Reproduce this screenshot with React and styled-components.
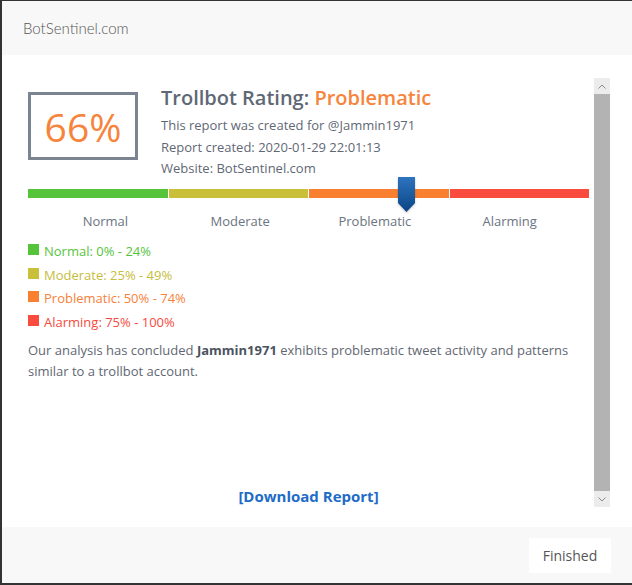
import React from "react";
import styled, { createGlobalStyle } from "styled-components";

const GlobalStyle = createGlobalStyle`
  html, body {
    margin: 0;
    padding: 0;
    background: #333;
  }
  body {
    font-family: "Open Sans", "Liberation Sans", sans-serif;
  }
`;

const Screen = styled.div`
  width: 632px;
  height: 585px;
  padding: 1px 0 2px 2px;
  box-sizing: border-box;
  overflow: hidden;
`;

const Modal = styled.div`
  height: 582px;
  display: flex;
  flex-direction: column;
  background: #fff;
`;

const Header = styled.div`
  height: 54px;
  flex: none;
  display: flex;
  align-items: center;
  padding-left: 21px;
  background: #f8f8f8;
  font-family: "Lato", "Open Sans", sans-serif;
  font-weight: 300;
  font-size: 15px;
  color: #555;
`;

const Body = styled.div`
  flex: 1;
  display: flex;
  gap: 5px;
  padding: 23px 22px 20px 26px;
`;

const Content = styled.div`
  width: 561px;
  display: flex;
  flex-direction: column;
  padding-top: 6px;
`;

const Summary = styled.div`
  display: flex;
  align-items: flex-start;
  gap: 23px;
`;

const ScoreBox = styled.div`
  width: 110px;
  height: 68px;
  box-sizing: border-box;
  margin-top: 8px;
  border: 3px solid #7b8591;
  display: flex;
  align-items: center;
  justify-content: center;
  font-size: 39px;
  color: #f7843c;
`;

const Info = styled.div`
  display: flex;
  flex-direction: column;
  color: #5f6875;
`;

const Title = styled.div`
  font-size: 20px;
  font-weight: 600;
  line-height: 28px;
  margin-bottom: 3px;
  color: #5f6875;
`;

const Accent = styled.span`
  color: #f7843c;
`;

const Line = styled.div`
  font-size: 13px;
  line-height: 21.5px;
`;

const Scale = styled.div`
  position: relative;
  margin-top: 9px;
`;

const Bar = styled.div`
  display: grid;
  grid-template-columns: repeat(4, 1fr);
  gap: 1px;
  height: 9px;
`;

const Segment = styled.div`
  background: ${(p) => p.$color};
`;

const Marker = styled.svg`
  position: absolute;
  top: -12px;
  left: ${(p) => p.$left};
  width: 19px;
  height: 35px;
  filter: drop-shadow(0 1px 1px rgba(0, 0, 0, 0.25));
`;

const Labels = styled.div`
  display: grid;
  grid-template-columns: repeat(4, 1fr);
  margin: 13px 12px 0 10px;
`;

const Label = styled.div`
  text-align: center;
  font-size: 13px;
  line-height: 20px;
  color: #6b7480;
`;

const Legend = styled.div`
  display: flex;
  flex-direction: column;
  margin-top: 9px;
`;

const LegendRow = styled.div`
  display: flex;
  align-items: center;
  gap: 5px;
  height: 23.5px;
  font-size: 13px;
  color: ${(p) => p.$color};
`;

const Swatch = styled.span`
  width: 11px;
  height: 11px;
  margin-top: -3px;
  background: ${(p) => p.$color};
`;

const Paragraph = styled.p`
  margin: 6px 0 0;
  font-size: 13px;
  line-height: 21px;
  color: #5f6772;

  b {
    color: #4b535e;
    font-weight: 700;
  }
`;

const Download = styled.a`
  margin-top: auto;
  align-self: center;
  font-size: 15px;
  font-weight: 700;
  line-height: 22px;
  color: #1e6cc7;
  text-decoration: none;
`;

const Scrollbar = styled.div`
  width: 16px;
  display: flex;
  flex-direction: column;
  background: #b3b3b3;
`;

const ScrollArrow = styled.div`
  height: 16px;
  flex: none;
  display: flex;
  align-items: center;
  justify-content: center;
  background: #ececec;
`;

const ScrollThumb = styled.div`
  flex: 1;
  background: #b3b3b3;
`;

const Footer = styled.div`
  height: 56px;
  flex: none;
  display: flex;
  align-items: center;
  justify-content: flex-end;
  padding-right: 21px;
  background: #f8f8f8;
`;

const Button = styled.button`
  width: 82px;
  height: 35px;
  border: none;
  background: #fff;
  font-family: "Open Sans", sans-serif;
  font-size: 14px;
  color: #555;
`;

const segments = [
  { name: "Normal", color: "#55c43a", range: "0% - 24%", text: "#56c43b" },
  { name: "Moderate", color: "#c9bf38", range: "25% - 49%", text: "#c6bd3c" },
  { name: "Problematic", color: "#f98030", range: "50% - 74%", text: "#f6813a" },
  { name: "Alarming", color: "#f94c3e", range: "75% - 100%", text: "#f44a3e" },
];

const Chevron = ({ up }) => (
  <svg width="8" height="5" viewBox="0 0 8 5">
    <path
      d={up ? "M0.5 4.5 L4 1 L7.5 4.5" : "M0.5 0.5 L4 4 L7.5 0.5"}
      fill="none"
      stroke="#8a8a8a"
      strokeWidth="1"
    />
  </svg>
);

export default function App() {
  return (
    <>
      <GlobalStyle />
      <Screen>
        <Modal>
          <Header>BotSentinel.com</Header>
          <Body>
            <Content>
              <Summary>
                <ScoreBox>66%</ScoreBox>
                <Info>
                  <Title>
                    Trollbot Rating: <Accent>Problematic</Accent>
                  </Title>
                  <Line>This report was created for @Jammin1971</Line>
                  <Line>Report created: 2020-01-29 22:01:13</Line>
                  <Line>Website: BotSentinel.com</Line>
                </Info>
              </Summary>
              <Scale>
                <Bar>
                  {segments.map((s) => (
                    <Segment key={s.name} $color={s.color} />
                  ))}
                </Bar>
                <Marker $left="369px" viewBox="0 0 19 35">
                  <defs>
                    <linearGradient id="mk" x1="0" y1="0" x2="0" y2="1">
                      <stop offset="0" stopColor="#2e74bf" />
                      <stop offset="1" stopColor="#0a4585" />
                    </linearGradient>
                  </defs>
                  <polygon points="1,0 18,0 18,26 9.5,35 1,26" fill="url(#mk)" />
                </Marker>
                <Labels>
                  {segments.map((s) => (
                    <Label key={s.name}>{s.name}</Label>
                  ))}
                </Labels>
              </Scale>
              <Legend>
                {segments.map((s) => (
                  <LegendRow key={s.name} $color={s.text}>
                    <Swatch $color={s.color} />
                    {s.name}: {s.range}
                  </LegendRow>
                ))}
              </Legend>
              <Paragraph>
                Our analysis has concluded <b>Jammin1971</b> exhibits problematic tweet
                activity and patterns similar to a trollbot account.
              </Paragraph>
              <Download href="#">[Download Report]</Download>
            </Content>
            <Scrollbar>
              <ScrollArrow>
                <Chevron up />
              </ScrollArrow>
              <ScrollThumb />
              <ScrollArrow>
                <Chevron />
              </ScrollArrow>
            </Scrollbar>
          </Body>
          <Footer>
            <Button>Finished</Button>
          </Footer>
        </Modal>
      </Screen>
    </>
  );
}
